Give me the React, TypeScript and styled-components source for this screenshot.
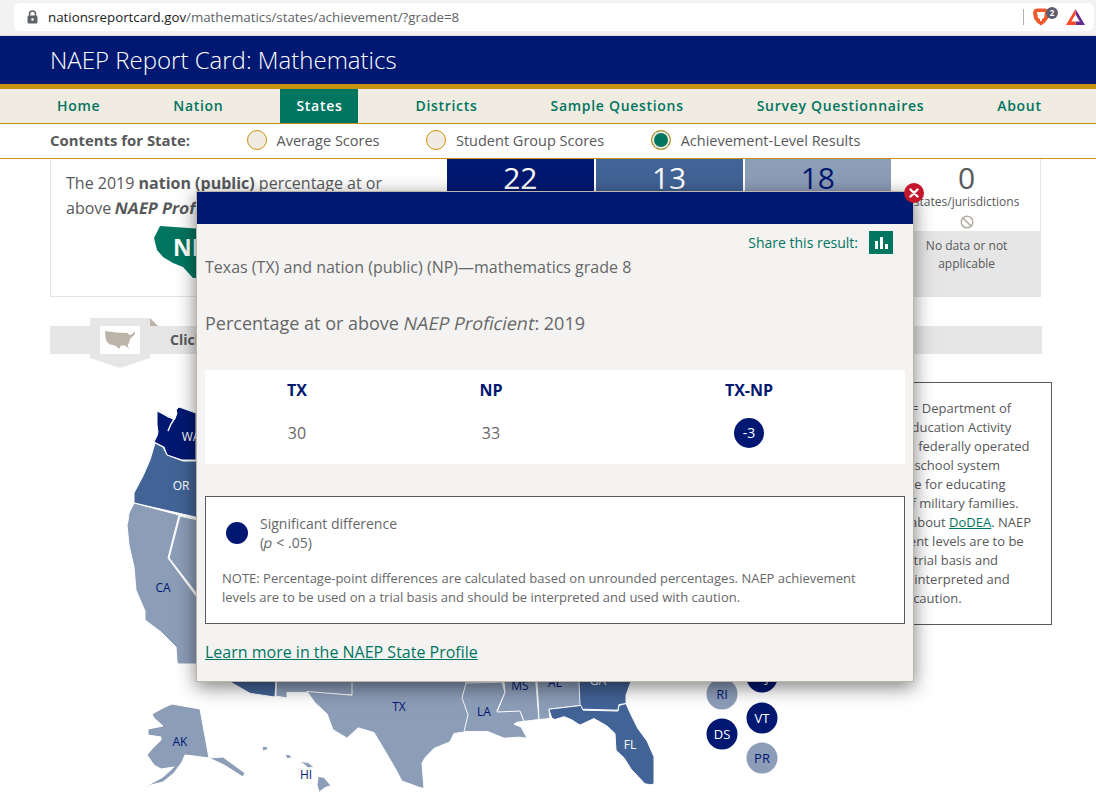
import React from 'react'
import styled, { createGlobalStyle } from 'styled-components'
import { Ban } from 'lucide-react'

const NAVY = '#001871'
const BLUE = '#426396'
const LIGHT = '#8c9db8'
const TEAL = '#00755f'
const GOLD = '#c8920f'
const TEXT = '#58595b'
const MUTED = '#666769'
const TAUPE = '#bcb4a8'

const GlobalStyle = createGlobalStyle`
  html, body {
    margin: 0;
    padding: 0;
    height: 100%;
    overflow: hidden;
    background: #fff;
    font-family: 'Open Sans', 'Liberation Sans', sans-serif;
    color: ${TEXT};
  }
`

const Page = styled.div`
  position: relative;
  width: 1096px;
  height: 810px;
  overflow: hidden;
`

const BrowserBar = styled.div`
  box-sizing: border-box;
  height: 36px;
  padding: 3px 2px 4px 14px;
  background: #f2f2f2;
  border-bottom: 1px solid #dcdcdc;
`

const Omnibox = styled.div`
  display: flex;
  align-items: center;
  height: 28px;
  padding-left: 12px;
  background: #fff;
  border-radius: 6px;
  font-size: 13.3px;
  color: #5f6368;

  svg {
    flex: none;
  }
`

const Url = styled.span`
  margin-left: 9px;
  flex: 1;

  b {
    font-weight: 400;
    color: #202124;
  }
`

const ExtensionDivider = styled.span`
  width: 1px;
  height: 16px;
  background: #b0b0b0;
`

const ExtensionIcons = styled.div`
  display: flex;
  align-items: center;
  width: 63px;
  flex: none;
  margin-left: 7px;
`

const SiteHeader = styled.header`
  height: 48px;
  padding-left: 50px;
  background: ${NAVY};
  border-bottom: 5px solid ${GOLD};
  color: #fff;
  font-size: 24px;
  font-weight: 300;
  line-height: 48px;
`

const Nav = styled.nav`
  display: flex;
  gap: 41px;
  height: 34px;
  padding-left: 41px;
  background: #f0ece2;
  border-bottom: 1px solid ${GOLD};
`

const NavItem = styled.a<{ $active?: boolean }>`
  padding: 0 16px;
  font-size: 14px;
  font-weight: 600;
  letter-spacing: 0.7px;
  line-height: 34px;
  color: ${({ $active }) => ($active ? '#fff' : TEAL)};
  background: ${({ $active }) => ($active ? TEAL : 'transparent')};
`

const ContentsBar = styled.div`
  box-sizing: border-box;
  display: flex;
  align-items: center;
  height: 35px;
  padding: 0 0 2px 50px;
  border-bottom: 1px solid ${GOLD};
  font-size: 14.5px;
`

const ContentsLabel = styled.strong`
  font-size: 14.9px;
  font-weight: 700;
`

const RadioGroup = styled.div`
  display: flex;
  gap: 47px;
  margin-left: 57px;
`

const RadioOption = styled.label`
  display: flex;
  align-items: center;
  gap: 9.5px;
`

const RadioDot = styled.span<{ $checked?: boolean }>`
  box-sizing: border-box;
  width: 20px;
  height: 20px;
  border: 1px solid ${GOLD};
  border-radius: 50%;
  background: ${({ $checked }) => ($checked ? TEAL : '#f0ece2')};
  box-shadow: ${({ $checked }) => ($checked ? 'inset 0 0 0 2px #f0ece2' : 'none')};
`

const Main = styled.main`
  padding-left: 50px;
`

const SummaryCard = styled.section`
  box-sizing: border-box;
  display: flex;
  width: 991px;
  height: 138px;
  border: 1px solid #e5e5e5;
  border-top: 0;
`

const SummaryText = styled.div`
  box-sizing: border-box;
  width: 396px;
  padding: 12px 30px 0 15px;
  font-size: 16px;
  line-height: 25px;
`

const NationMap = styled.svg`
  display: block;
  margin: 5px 0 0 88px;
`

// the page's italics are slanted regular faces, wider than a true italic
const Slanted = styled.em`
  display: inline-block;
  font-style: normal;
  transform: skewX(-12deg);
`

const TileRow = styled.div`
  display: flex;
  flex: 1;
  gap: 2px;
`

const Tile = styled.div`
  display: flex;
  flex-direction: column;
  flex: 1;
  text-align: center;
`

const TileHead = styled.div<{ $bg: string; $fg: string }>`
  height: 72px;
  background: ${({ $bg }) => $bg};
  color: ${({ $fg }) => $fg};
`

const TileCount = styled.div`
  padding-top: 3px;
  font-size: 30px;
  line-height: 32px;
`

const TileUnit = styled.div`
  font-size: 12px;
  line-height: 16px;
`

const TileIcon = styled.div`
  display: flex;
  justify-content: center;
  margin-top: 5px;
  color: #b5aea5;
`

const TileFoot = styled.div`
  flex: 1;
  padding: 6px 20px 0;
  background: #e6e6e6;
  font-size: 12px;
  line-height: 18px;
`

const Band = styled.div`
  display: flex;
  align-items: flex-start;
  width: 992px;
  height: 28px;
  margin-top: 29px;
  background: #e6e6e6;
  font-size: 14px;
  line-height: 28px;
`

const MapTab = styled.div`
  box-sizing: border-box;
  width: 60px;
  height: 50px;
  margin: -8px 0 0 40px;
  padding: 8px 10px 0;
  background: #e6e6e6;
  clip-path: polygon(0 0, 100% 0, 100% 40px, 50% 50px, 0 40px);
`

const MapTabFold = styled.span`
  width: 8px;
  height: 8px;
  margin-top: -8px;
  background: ${TAUPE};
  clip-path: polygon(0 0, 100% 100%, 0 100%);
`

const MapThumb = styled.div`
  display: flex;
  align-items: center;
  justify-content: center;
  height: 28px;
  background: #fff;
`

const BandText = styled.strong`
  margin-left: 12px;
  font-weight: 700;
`

const MapRow = styled.div`
  display: flex;
  align-items: flex-start;
  width: 1002px;
  margin-top: 28px;
`

const StateMap = styled.svg`
  display: block;
  flex: none;
  font-size: 12px;
`

const StateLabel = styled.text<{ $light?: boolean }>`
  fill: ${({ $light }) => ($light ? '#fff' : NAVY)};
  text-anchor: middle;
  dominant-baseline: central;
`

const PinLabel = styled(StateLabel)`
  font-size: 13px;
`

const MapNote = styled.aside`
  box-sizing: border-box;
  width: 222px;
  height: 243px;
  padding: 16px 0 0 20px;
  border: 1px solid ${TEXT};
  font-size: 13px;
  line-height: 19px;
  white-space: nowrap;
`

const TextLink = styled.a`
  color: ${TEAL};
  text-decoration: underline;
`

const Modal = styled.div`
  position: absolute;
  top: 191px;
  left: 196px;
  box-sizing: border-box;
  width: 718px;
  height: 491px;
  background: #f4f3f1;
  border: 1px solid ${TAUPE};
  box-shadow: 0 5px 18px rgba(0, 0, 0, 0.5);
  color: ${MUTED};
`

const ModalHeader = styled.div`
  height: 32px;
  background: ${NAVY};
`

const CloseButton = styled.button`
  position: absolute;
  top: -9px;
  right: -11px;
  display: flex;
  align-items: center;
  justify-content: center;
  width: 20px;
  height: 20px;
  padding: 0;
  border: 0;
  border-radius: 50%;
  background: #c4172c;
`

const ModalBody = styled.div`
  padding: 7px 8px 0;
`

const ShareRow = styled.div`
  display: flex;
  align-items: center;
  justify-content: flex-end;
  gap: 11px;
  height: 23px;
  padding-right: 12px;
  color: ${TEAL};
  font-size: 14px;
`

const ShareButton = styled.span`
  display: block;
  width: 24px;
  height: 23px;
  background: ${TEAL};
`

const ResultTitle = styled.h2`
  margin: 2px 0 0;
  font-size: 16px;
  font-weight: 400;
  line-height: 22px;
`

const ResultSubtitle = styled.h3`
  margin: 32px 0 0;
  font-size: 18px;
  font-weight: 400;
  line-height: 26px;
`

const ResultTable = styled.div`
  display: grid;
  grid-template-columns: 184px 204px 312px;
  align-content: start;
  row-gap: 17px;
  align-items: center;
  justify-items: center;
  box-sizing: border-box;
  height: 94px;
  margin-top: 34px;
  padding-top: 9px;
  background: #fff;
  font-size: 16px;
`

const ColumnHead = styled.strong`
  color: ${NAVY};
  font-weight: 700;
  line-height: 22px;
`

const SigBadge = styled.span`
  display: block;
  width: 30px;
  height: 30px;
  border-radius: 50%;
  background: ${NAVY};
  color: #fff;
  font-size: 14px;
  line-height: 30px;
  text-align: center;
`

const LegendBox = styled.div`
  box-sizing: border-box;
  height: 128px;
  margin-top: 32px;
  padding: 17px 16px 0;
  background: #fff;
  border: 1px solid ${TEXT};
`

const LegendKey = styled.div`
  display: flex;
  align-items: center;
  gap: 12px;
  padding-left: 4px;
  font-size: 14px;
  line-height: 19px;
`

const LegendDot = styled.span`
  width: 22px;
  height: 22px;
  border-radius: 50%;
  background: ${NAVY};
`

const LegendNote = styled.p`
  max-width: 650px;
  margin: 17px 0 0;
  font-size: 13px;
  line-height: 19px;
`

const ProfileLink = styled(TextLink)`
  display: inline-block;
  margin-top: 17px;
  font-size: 16px;
  line-height: 22px;
`

const NAV_ITEMS = ['Home', 'Nation', 'States', 'Districts', 'Sample Questions', 'Survey Questionnaires', 'About']
const RADIOS = ['Average Scores', 'Student Group Scores', 'Achievement-Level Results']

const TILES = [
  { count: 22, bg: NAVY, fg: '#fff' },
  { count: 13, bg: BLUE, fg: '#fff' },
  { count: 18, bg: LIGHT, fg: NAVY },
  { count: 0, bg: '#fff', fg: TEXT, foot: 'No data or not applicable' },
]

const WEST_STATES = [
  // washington
  {
    fill: NAVY,
    d: 'M157 411l6 3 5 3 3 1 3 2 2-4 1-3-1-3 3-3 17 6v47h-14l-15-5-3-8-10-5 3-6 1-4-1-7z',
  },
  // oregon
  { fill: BLUE, d: 'M155 443l8 4 4 8 16 6h30v60l-79-18v-10l9-17 7-16z' },
  // california
  {
    fill: LIGHT,
    d: 'M134 503l45 12-11 43 45 61v45h-35l-1-2-1-15-15-15-16-12v-9l-9-21-2-23-5-22-2-20 1-4 1-8z',
  },
  // nevada
  { fill: LIGHT, d: 'M180 516l40 9v90l-16-12-35-45z' },
  // alaska
  {
    fill: LIGHT,
    d: 'M172 704l28 5 9 49 14-1 22 16-2 4-19-12-15-7-15-2-9-1-3 7-8 11-11 9-12 3-20 8 14-6 18-10 11-10-13 2-7-4-7-10 5-6 9-9v-3l-13-2v-6l15-3-9-8-2-4 13-7z',
  },
]

// traced at a flatter scale than the west, squashed back where they are drawn
const SOUTH_STATES = [
  // arizona
  { fill: BLUE, d: 'M215 660h62l-2 39-25-4-21-13z' },
  // new mexico and oklahoma, what shows under the dialog
  { fill: LIGHT, d: 'M277 660h76v37l-45-3-21 0v6l-11-2z' },
  // texas
  {
    fill: LIGHT,
    d: 'M307 693l45 4v-37h114v40l6 18-4 18-14 2-4 9-16 7-9 10-3 6 2 27-4-1-18-7-7-14-12-22-9-16-16-5-11 11-14-9-6-17-12-12z',
  },
  // arkansas strip
  { fill: LIGHT, d: 'M466 660h36v24h-36z' },
  // louisiana
  {
    fill: LIGHT,
    d: 'M466 684l36-1 3 11-8 20 23-1 4 12-7 1-3 2 7 3 6 12-8-1-15 1-16-7-24 0 4-18-6-18z',
  },
  // mississippi
  { fill: LIGHT, d: 'M502 660h32l5 63-15 2-4-11-23 1 8-21z' },
  // alabama
  { fill: LIGHT, d: 'M536 660h42l3 48-32 4 1 10-11 1z' },
  // georgia
  { fill: BLUE, d: 'M578 660h55l-2 22-5 15 0 9-7 1-1 6-36-1-2-5z' },
  // florida
  {
    fill: BLUE,
    d: 'M549 712l32-4 2 5 35 1 1-6 7-2 5 12 7 15 9 13 7 17v29l-3 1-6-1-7-8-7-8-7-12-8-8-1-18-8-8-13-8-14 7-9-6-7-3-9 3-3-1-2-6z',
  },
  // hawaii
  { fill: LIGHT, d: 'M262 752l5 0 1 3-5 2z' },
  { fill: LIGHT, d: 'M285 760l5 1 2 3-5 1z' },
  { fill: LIGHT, d: 'M299 768l9 1 6 5-6 1-4-4z' },
  { fill: LIGHT, d: 'M318 784l6 1 7 9-6 2-6 5-2-8z' },
]

const REGION_LABELS = [
  { text: 'WA', x: 191, y: 436, light: true },
  { text: 'OR', x: 181, y: 485, light: true },
  { text: 'CA', x: 163, y: 587 },
  { text: 'TX', x: 399, y: 706 },
  { text: 'LA', x: 484, y: 711 },
  { text: 'MS', x: 520, y: 685 },
  { text: 'AL', x: 555, y: 682 },
  { text: 'GA', x: 598, y: 680, light: true },
  { text: 'FL', x: 630, y: 744, light: true },
  { text: 'AK', x: 180, y: 741 },
  { text: 'HI', x: 306, y: 774 },
]

const PINS = [
  { text: 'NJ', x: 762, y: 677, dark: true },
  { text: 'RI', x: 722, y: 694, dark: false },
  { text: 'VT', x: 762, y: 718, dark: true },
  { text: 'DS', x: 722, y: 734, dark: true },
  { text: 'PR', x: 762, y: 758, dark: false },
]

const US_THUMB =
  'M1 1L12 2.500 24 3 25 5 28 4 31 1.500V4L28 7 26 9 25 13 23.500 15 25 19 23 17 21 15.500H17L15 19 12 16 9 15 6 14.500 3 12 1.500 8Z'

function StatePaths({ states }: { states: { fill: string; d: string }[] }) {
  return (
    <>
      {states.map((state) => (
        <path key={state.d} d={state.d} fill={state.fill} stroke="#fff" strokeWidth="1" strokeLinejoin="round" />
      ))}
    </>
  )
}

function NoteLines() {
  return (
    <MapNote>
      (DoDEA){'\u00a0\u00a0\u00a0'}= Department of
      <br />
      Defense Education Activity
      <br />
      (DoDEA), a federally operated
      <br />
      US{'\u00a0'} public school system
      <br />
      responsible for educating
      <br />
      children of military families.
      <br />
      For more about <TextLink>DoDEA</TextLink>. NAEP
      <br />
      achievement levels are to be
      <br />
      used on a trial basis and
      <br />
      should be interpreted and
      <br />
      used with caution.
    </MapNote>
  )
}

export default function App() {
  return (
    <Page>
      <GlobalStyle />
      <BrowserBar>
        <Omnibox>
          <svg width="13" height="14" viewBox="0 0 13 14">
            <path d="M3.500 6V4a3 3 0 0 1 6 0v2" fill="none" stroke="#5f6368" strokeWidth="1.500" />
            <rect x="1.500" y="5.500" width="10" height="8" rx="1.500" fill="#5f6368" />
            <circle cx="6.500" cy="9.500" r="1.300" fill="#fff" />
          </svg>
          <Url>
            <b>nationsreportcard.gov</b>/mathematics/states/achievement/?grade=8
          </Url>
          <ExtensionDivider />
          <ExtensionIcons>
            <svg width="63" height="22" viewBox="0 0 63 22">
              <path d="M3 3.500l3-1h8l3 1 1 3-1 6-3 4-4 3-4-3-3-4-1-6z" fill="#f1592a" />
              <path d="M6 6h8l-1 6-2 1v2H9v-2l-2-1z" fill="#fff" />
              <circle cx="21" cy="7" r="6" fill="#5b5f70" />
              <text x="21" y="10" fontSize="8" fontWeight="700" fill="#fff" textAnchor="middle">
                2
              </text>
              <path d="M44.500 3L54 19H44.500z" fill="#662d91" />
              <path d="M44.500 3L35 19h9.500z" fill="#ff4724" />
              <path d="M44.500 8.500l-4.300 7h8.600z" fill="#fff" />
            </svg>
          </ExtensionIcons>
        </Omnibox>
      </BrowserBar>

      <SiteHeader>NAEP Report Card: Mathematics</SiteHeader>

      <Nav>
        {NAV_ITEMS.map((item) => (
          <NavItem key={item} $active={item === 'States'}>
            {item}
          </NavItem>
        ))}
      </Nav>

      <ContentsBar>
        <ContentsLabel>Contents for State:</ContentsLabel>
        <RadioGroup>
          {RADIOS.map((label, i) => (
            <RadioOption key={label}>
              <RadioDot $checked={i === 2} />
              {label}
            </RadioOption>
          ))}
        </RadioGroup>
      </ContentsBar>

      <Main>
        <SummaryCard>
          <SummaryText>
            The 2019 <strong>nation (public)</strong> percentage at or above{' '}
            <strong>
              <Slanted>NAEP Proficient</Slanted>
            </strong>
            <NationMap width="120" height="56" viewBox="0 0 120 56">
              <path d="M6 0L120 8V30L60 40 43 52H39L29 41 19 37 9 31 3 24 0 12Z" fill={TEAL} />
              <text x="19" y="30" fontSize="23" fontWeight="700" fill="#fff">
                NP
              </text>
            </NationMap>
          </SummaryText>
          <TileRow>
            {TILES.map((tile) => (
              <Tile key={tile.count}>
                <TileHead $bg={tile.bg} $fg={tile.fg}>
                  <TileCount>{tile.count}</TileCount>
                  {tile.foot && (
                    <>
                      <TileUnit>states/jurisdictions</TileUnit>
                      <TileIcon>
                        <Ban size={14} strokeWidth={2.5} />
                      </TileIcon>
                    </>
                  )}
                </TileHead>
                <TileFoot>{tile.foot}</TileFoot>
              </Tile>
            ))}
          </TileRow>
        </SummaryCard>

        <Band>
          <MapTab>
            <MapThumb>
              <svg width="32" height="20" viewBox="0 0 32 20">
                <path d={US_THUMB} fill={TAUPE} />
              </svg>
            </MapThumb>
          </MapTab>
          <MapTabFold />
          <BandText>Click</BandText>
        </Band>

        <MapRow>
          <StateMap width="780" height="424" viewBox="50 382 780 424">
            <StatePaths states={WEST_STATES} />
            <path d="M176 410l-1 8-4 6-3 7" fill="none" stroke="#fff" strokeWidth="1.500" />
            <g transform="translate(0 670) scale(1 0.9333) translate(0 -670)">
              <StatePaths states={SOUTH_STATES} />
            </g>
            {REGION_LABELS.map((label) => (
              <StateLabel key={label.text} x={label.x} y={label.y} $light={label.light}>
                {label.text}
              </StateLabel>
            ))}
            {PINS.map((pin) => (
              <g key={pin.text}>
                <circle cx={pin.x} cy={pin.y} r="15.500" fill={pin.dark ? NAVY : LIGHT} />
                <PinLabel x={pin.x} y={pin.y} $light={pin.dark}>
                  {pin.text}
                </PinLabel>
              </g>
            ))}
          </StateMap>
          <NoteLines />
        </MapRow>
      </Main>

      <Modal>
        <CloseButton aria-label="Close">
          <svg width="10" height="10" viewBox="0 0 10 10">
            <path d="M1.500 1.500l7 7M8.500 1.500l-7 7" stroke="#fff" strokeWidth="2.400" strokeLinecap="round" />
          </svg>
        </CloseButton>
        <ModalHeader />
        <ModalBody>
          <ShareRow>
            Share this result:
            <ShareButton>
              <svg width="24" height="23" viewBox="0 0 24 23">
                <rect x="6" y="10" width="3" height="8" fill="#fff" />
                <rect x="11" y="6" width="3" height="12" fill="#fff" />
                <rect x="16" y="13" width="3" height="5" fill="#fff" />
              </svg>
            </ShareButton>
          </ShareRow>
          <ResultTitle>Texas (TX) and nation (public) (NP)—mathematics grade 8</ResultTitle>
          <ResultSubtitle>
            Percentage at or above <Slanted>NAEP Proficient</Slanted>: 2019
          </ResultSubtitle>
          <ResultTable>
            <ColumnHead>TX</ColumnHead>
            <ColumnHead>NP</ColumnHead>
            <ColumnHead>TX-NP</ColumnHead>
            <span>30</span>
            <span>33</span>
            <SigBadge>-3</SigBadge>
          </ResultTable>
          <LegendBox>
            <LegendKey>
              <LegendDot />
              <span>
                Significant difference
                <br />
                (<Slanted>p</Slanted> &lt; .05)
              </span>
            </LegendKey>
            <LegendNote>
              NOTE: Percentage-point differences are calculated based on unrounded percentages. NAEP achievement
              levels are to be used on a trial basis and should be interpreted and used with caution.
            </LegendNote>
          </LegendBox>
          <ProfileLink>Learn more in the NAEP State Profile</ProfileLink>
        </ModalBody>
      </Modal>
    </Page>
  )
}
